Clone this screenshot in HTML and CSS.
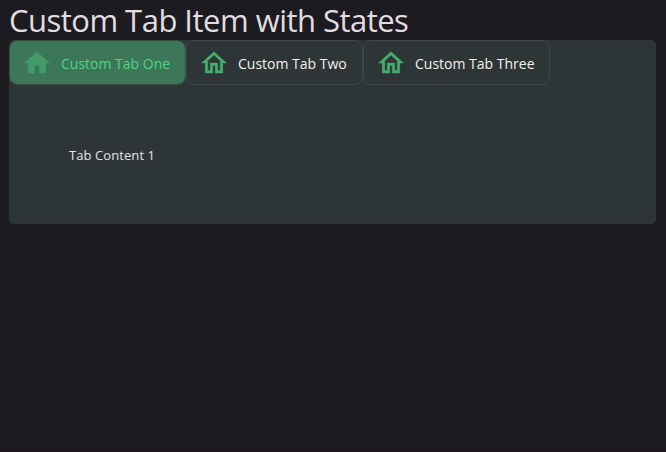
FILE: index.html
```html
<!DOCTYPE html>
<html lang="en">
<head>
<meta charset="utf-8">
<title>Custom Tab Item with States</title>
<link rel="stylesheet" href="styles.css">
</head>
<body>
<main class="page">
  <h1 class="title">Custom Tab Item with States</h1>
  <section class="panel">
    <div class="tabs" role="tablist">
      <button class="tab tab-active" role="tab">
        <svg class="icon" viewBox="0 0 24 24"><path d="M10 20v-6h4v6h5v-8h3L12 3 2 12h3v8z"/></svg>
        <span class="label">Custom Tab One</span>
      </button>
      <button class="tab" role="tab">
        <svg class="icon" viewBox="0 0 24 24"><path d="M12 5.69l5 4.5V18h-2v-6H9v6H7v-7.81l5-4.5M12 3L2 12h3v8h6v-6h2v6h6v-8h3L12 3z"/></svg>
        <span class="label">Custom Tab Two</span>
      </button>
      <button class="tab tab-wide" role="tab">
        <svg class="icon" viewBox="0 0 24 24"><path d="M12 5.69l5 4.5V18h-2v-6H9v6H7v-7.81l5-4.5M12 3L2 12h3v8h6v-6h2v6h6v-8h3L12 3z"/></svg>
        <span class="label">Custom Tab Three</span>
      </button>
    </div>
    <p class="content">Tab Content 1</p>
  </section>
</main>
</body>
</html>
```
FILE: styles.css
```css
* { box-sizing: border-box; }
body {
  margin: 0;
  height: 452px;
  overflow: hidden;
  background: #1c1b1f;
  font-family: "Open Sans", "Noto Sans", sans-serif;
}
.page {
  height: 452px;
  padding: 0 10px 0 9px;
  border-bottom: 4px solid #1c171c;
}
.title {
  margin: 0;
  height: 40px;
  font-size: 31px;
  font-weight: 400;
  line-height: 41px;
  letter-spacing: -0.52px;
  white-space: nowrap;
  color: #e2dde1;
}
.panel {
  height: 184px;
  border-radius: 5px;
  background: #2d3537;
}
.tabs { display: flex; }
.tab {
  display: flex;
  align-items: center;
  gap: 9px;
  width: 177px;
  height: 45px;
  padding: 0 0 0 12px;
  border: 1px solid #3d4648;
  border-radius: 8px;
  background: transparent;
  font-family: inherit;
  font-size: 14px;
  line-height: 20px;
  white-space: nowrap;
  color: #f4f2e9;
}
.tab-wide { width: 187px; }
.tab-active {
  border-color: #3d4b49;
  background: #3d7759;
  background-clip: padding-box;
  color: #4cd580;
}
.label { padding-top: 2px; }
.icon {
  flex: none;
  width: 30px;
  height: 30px;
  fill: #45b06c;
  stroke: #45b06c;
  stroke-width: 0.3;
}
.tab-active .icon {
  fill: #439c67;
  stroke: #439c67;
}
.content {
  margin: 0;
  padding: 60px 0 0 60px;
  font-size: 13px;
  line-height: 20px;
  letter-spacing: 0.08px;
  color: #e6e1e5;
}
```
